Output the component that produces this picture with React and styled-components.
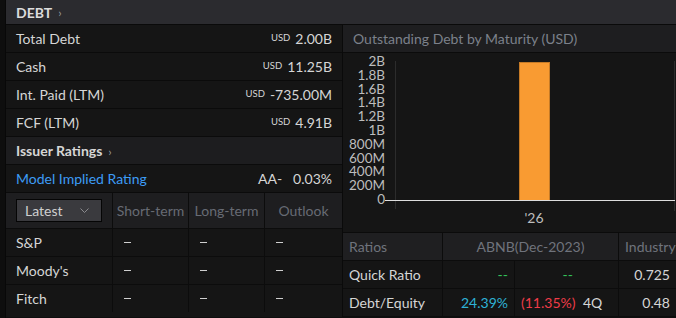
import React from 'react';
import styled, { createGlobalStyle } from 'styled-components';

const GlobalStyle = createGlobalStyle`
  html, body {
    margin: 0;
    background: #0e0e0e;
    font-family: Lato, "Liberation Sans", sans-serif;
    font-size: 14px;
    color: #d6d6d6;
  }
`;

const Page = styled.div`
  width: 676px;
  height: 318px;
  display: flex;
  overflow: hidden;
  background: #0e0e0e;
`;

const Gutter = styled.div`
  width: 5px;
  flex: none;
  border-right: 1px solid #080808;
`;

const Panel = styled.div`
  flex: 1;
  display: flex;
  flex-direction: column;
  min-width: 0;
`;

const TopBar = styled.div`
  height: 24px;
  display: flex;
  align-items: center;
  padding: 0 10px;
  background: #2b2b2f;
  border-bottom: 1px solid #0a0a0a;
  font-weight: 700;
  color: #dcdcdc;
`;

const Chevron = styled.span`
  margin-left: 6px;
  font-size: 12px;
  color: #9a9a9a;
  font-weight: 400;
`;

const Body = styled.div`
  display: grid;
  grid-template-columns: 336px 1fr;
  gap: 1px;
  background: #0a0a0a;
`;

const Column = styled.div`
  display: flex;
  flex-direction: column;
  background: #151515;
`;

const Row = styled.div`
  height: 27px;
  display: flex;
  align-items: center;
  justify-content: space-between;
  padding: 0 10px;
  border-bottom: 1px solid #0b0b0b;
  background: ${p => (p.$shade ? '#1d1d1f' : '#151515')};
  font-weight: ${p => (p.$bold ? 700 : 400)};
`;

const Money = styled.span`
  display: flex;
  align-items: baseline;
  gap: 5px;
`;

const Cur = styled.span`
  font-size: 9.5px;
  position: relative;
  top: -3px;
`;

const LinkText = styled.span`
  color: #3d9cf5;
`;

const Rating = styled.span`
  display: flex;
  gap: 11px;
`;

const RTable = styled.div`
  display: grid;
  grid-template-columns: 107px 76px 76px 1fr;
`;

const HeadCell = styled.div`
  height: 35px;
  display: flex;
  align-items: center;
  justify-content: ${p => (p.$left ? 'flex-start' : 'center')};
  padding: ${p => (p.$left ? '0 10px' : '0')};
  background: #1e1e20;
  color: #676b74;
  white-space: nowrap;
  border-right: ${p => (p.$last ? 'none' : '1px solid #0c0c0c')};
  border-bottom: 1px solid #0c0c0c;
`;

const Select = styled.div`
  width: 84px;
  height: 21px;
  box-sizing: content-box;
  display: flex;
  align-items: center;
  justify-content: space-between;
  padding: 0 0 0 8px;
  background: #3a3a3e;
  border: 1px solid #050505;
  color: #cfcfcf;
  svg {
    margin-right: 12px;
  }
`;

const Cell = styled.div`
  height: 27px;
  display: flex;
  align-items: center;
  padding: 0 10px;
  border-right: ${p => (p.$last ? 'none' : '1px solid #0c0c0c')};
  border-bottom: ${p => (p.$end ? 'none' : '1px solid #0c0c0c')};
`;

const Dash = styled.span`
  display: inline-block;
  width: 7px;
  height: 1px;
  margin-left: 1px;
  background: #cfcfcf;
`;

const ChartTitle = styled.div`
  height: 27px;
  display: flex;
  align-items: center;
  padding: 0 10px;
  background: #1e1e20;
  border-bottom: 1px solid #0b0b0b;
  color: #7c818b;
`;

const ChartBox = styled.div`
  height: 179px;
  border-bottom: 1px solid #0b0b0b;
`;

const Ratios = styled.div`
  display: grid;
  grid-template-columns: 100px 72px 104px 1fr;
`;

const RHead = styled.div`
  grid-column: ${p => p.$span || 'auto'};
  height: 27px;
  display: flex;
  align-items: center;
  justify-content: ${p => p.$align || 'flex-start'};
  padding: 0 6px;
  background: #1f1f21;
  color: #6f737c;
  border-right: ${p => (p.$last ? 'none' : '1px solid #0c0c0c')};
  border-bottom: 1px solid #0c0c0c;
  white-space: nowrap;
  overflow: hidden;
`;

const RCell = styled.div`
  height: 27px;
  display: flex;
  align-items: center;
  justify-content: ${p => p.$align || 'flex-start'};
  padding: 0 6px;
  gap: 10px;
  color: ${p => p.$color || '#d6d6d6'};
  border-right: ${p => (p.$last ? 'none' : '1px solid #0c0c0c')};
  border-bottom: 1px solid #0c0c0c;
  white-space: nowrap;
`;

const Val = styled.span`
  width: 52px;
  text-align: right;
  color: ${p => p.$color};
`;

const debtRows = [
  { label: 'Total Debt', value: '2.00B' },
  { label: 'Cash', value: '11.25B' },
  { label: 'Int. Paid (LTM)', value: '-735.00M' },
  { label: 'FCF (LTM)', value: '4.91B' },
];

const agencies = ['S&P', "Moody's", 'Fitch'];
const ticks = ['2B', '1.8B', '1.6B', '1.4B', '1.2B', '1B', '800M', '600M', '400M', '200M', '0'];

const Chart = () => (
  <svg width="333" height="179" viewBox="0 0 333 179">
    <line x1="52.5" y1="8" x2="52.5" y2="156" stroke="#2c2c2c" />
    <line x1="331.5" y1="8" x2="331.5" y2="158" stroke="#2c2c2c" />
    {ticks.map((t, i) => (
      <text key={t} x="42" y={13 + i * 13.8} textAnchor="end" fontSize="13.5" fill="#bdbdbd" fontFamily="Lato, sans-serif">
        {t}
      </text>
    ))}
    <rect x="176.5" y="9.5" width="30" height="138" fill="#f99b32" stroke="#c57a26" />
    <line x1="42" y1="147.5" x2="332" y2="147.5" stroke="#dedede" />
    <text x="191" y="170" textAnchor="middle" fontSize="14" fill="#bdbdbd" fontFamily="Lato, sans-serif">
      '26
    </text>
  </svg>
);

const App = () => (
  <Page>
    <GlobalStyle />
    <Gutter />
    <Panel>
      <TopBar>
        DEBT<Chevron>›</Chevron>
      </TopBar>
      <Body>
        <Column>
          {debtRows.map(r => (
            <Row key={r.label}>
              <span>{r.label}</span>
              <Money>
                <Cur>USD</Cur>
                {r.value}
              </Money>
            </Row>
          ))}
          <Row $shade $bold>
            <span>
              Issuer Ratings<Chevron>›</Chevron>
            </span>
          </Row>
          <Row>
            <LinkText>Model Implied Rating</LinkText>
            <Rating>
              <span>AA-</span>
              <span>0.03%</span>
            </Rating>
          </Row>
          <RTable>
            <HeadCell $left>
              <Select>
                Latest
                <svg width="9" height="6" viewBox="0 0 9 6">
                  <path d="M0.5 0.5 L4.5 4.5 L8.5 0.5" fill="none" stroke="#8a8a8e" strokeWidth="1" />
                </svg>
              </Select>
            </HeadCell>
            <HeadCell>Short-term</HeadCell>
            <HeadCell>Long-term</HeadCell>
            <HeadCell $last>Outlook</HeadCell>
            {agencies.map((a, i) => (
              <React.Fragment key={a}>
                <Cell $end={i === agencies.length - 1}>{a}</Cell>
                <Cell $end={i === agencies.length - 1}><Dash /></Cell>
                <Cell $end={i === agencies.length - 1}><Dash /></Cell>
                <Cell $end={i === agencies.length - 1} $last><Dash /></Cell>
              </React.Fragment>
            ))}
          </RTable>
        </Column>
        <Column>
          <ChartTitle>Outstanding Debt by Maturity (USD)</ChartTitle>
          <ChartBox>
            <Chart />
          </ChartBox>
          <Ratios>
            <RHead>Ratios</RHead>
            <RHead $span="span 2" $align="center">ABNB(Dec-2023)</RHead>
            <RHead $last>Industry</RHead>
            <RCell>Quick Ratio</RCell>
            <RCell $align="flex-end" $color="#33c25a">--</RCell>
            <RCell>
              <Val $color="#33c25a">--</Val>
            </RCell>
            <RCell $align="flex-end" $last>0.725</RCell>
            <RCell>Debt/Equity</RCell>
            <RCell $align="flex-end" $color="#2eb2d6">24.39%</RCell>
            <RCell>
              <Val $color="#ef3c48">(11.35%)</Val>
              <span>4Q</span>
            </RCell>
            <RCell $align="flex-end" $last>0.48</RCell>
          </Ratios>
        </Column>
      </Body>
    </Panel>
  </Page>
);

export default App;
